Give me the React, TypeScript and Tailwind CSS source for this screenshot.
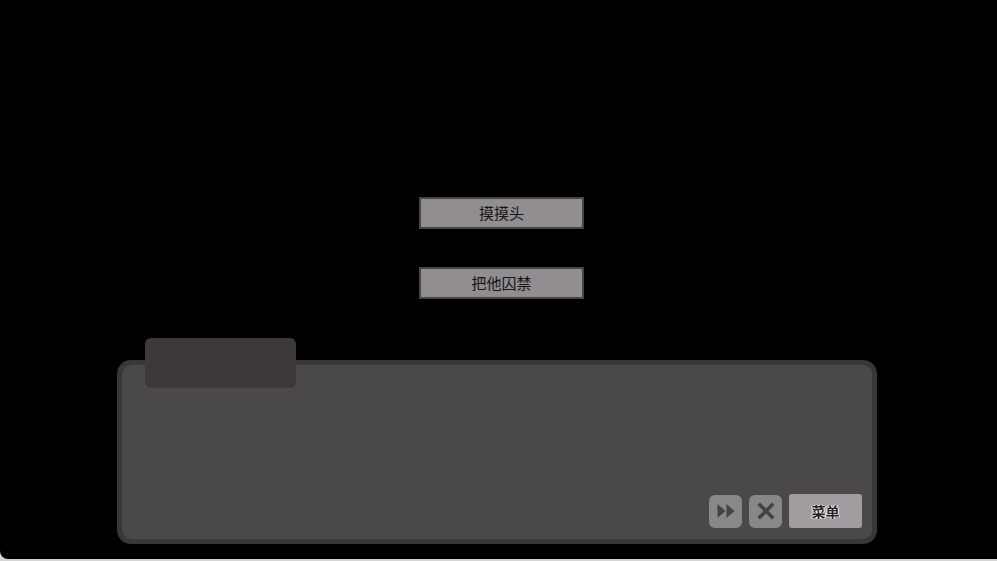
import React from "react";

const choices = ["摸摸头", "把他囚禁"];

const FastForward: React.FC = () => (
  <svg width="20" height="16" viewBox="0 0 20 16">
    <path d="M1.5 1 L9.5 8 L1.5 15 Z" fill="#454244" />
    <path d="M10.5 1 L18.5 8 L10.5 15 Z" fill="#454244" />
  </svg>
);

const CloseIcon: React.FC = () => (
  <svg width="18" height="18" viewBox="0 0 18 18">
    <path d="M3 3 L15 15 M15 3 L3 15" stroke="#454244" strokeWidth="3.6" strokeLinecap="square" />
  </svg>
);

const App: React.FC = () => {
  return (
    <div
      className="w-[997px] h-[561px] bg-[#d4d4d4] overflow-hidden"
      style={{ fontFamily: '"Noto Sans CJK SC", "Noto Sans", sans-serif' }}
    >
      <div className="h-[559px] bg-black rounded-bl-[8px] flex flex-col pt-[197px]">
        {/* Choice buttons */}
        <div className="flex flex-col items-center gap-[38px] pl-[6px]">
          {choices.map((c) => (
            <button
              key={c}
              className="w-[165px] h-[32px] bg-[#918d91] border-2 border-[#484547] text-[#151515] text-[15px] leading-none flex items-center justify-center pb-[2px]"
            >
              {c}
            </button>
          ))}
        </div>

        {/* Dialog box */}
        <div className="relative ml-[117px] mt-[61px] w-[760px] h-[184px]">
          <div className="h-full bg-[#4a4849] border-[5px] border-[#3a3739] rounded-[14px] flex flex-col justify-end items-end pr-[10px] pb-[11px]">
            <div className="flex items-center gap-[7px]">
              <button className="w-[33px] h-[33px] rounded-[6px] bg-[#8a878a] flex items-center justify-center">
                <FastForward />
              </button>
              <button className="w-[33px] h-[33px] rounded-[6px] bg-[#8a878a] flex items-center justify-center">
                <CloseIcon />
              </button>
              <button className="w-[73px] h-[34px] rounded-[3px] bg-[#a09ca0] flex items-center justify-center text-[14px] font-bold text-[#222] [text-shadow:0_0_1px_#fff,0_0_1px_#fff,1px_0_0_#fff,-1px_0_0_#fff]">
                菜单
              </button>
            </div>
          </div>
          {/* Name tab */}
          <div className="absolute -top-[22px] left-[28px] w-[151px] h-[50px] bg-[#3c383b] rounded-[6px]" />
        </div>
      </div>
    </div>
  );
};

export default App;
